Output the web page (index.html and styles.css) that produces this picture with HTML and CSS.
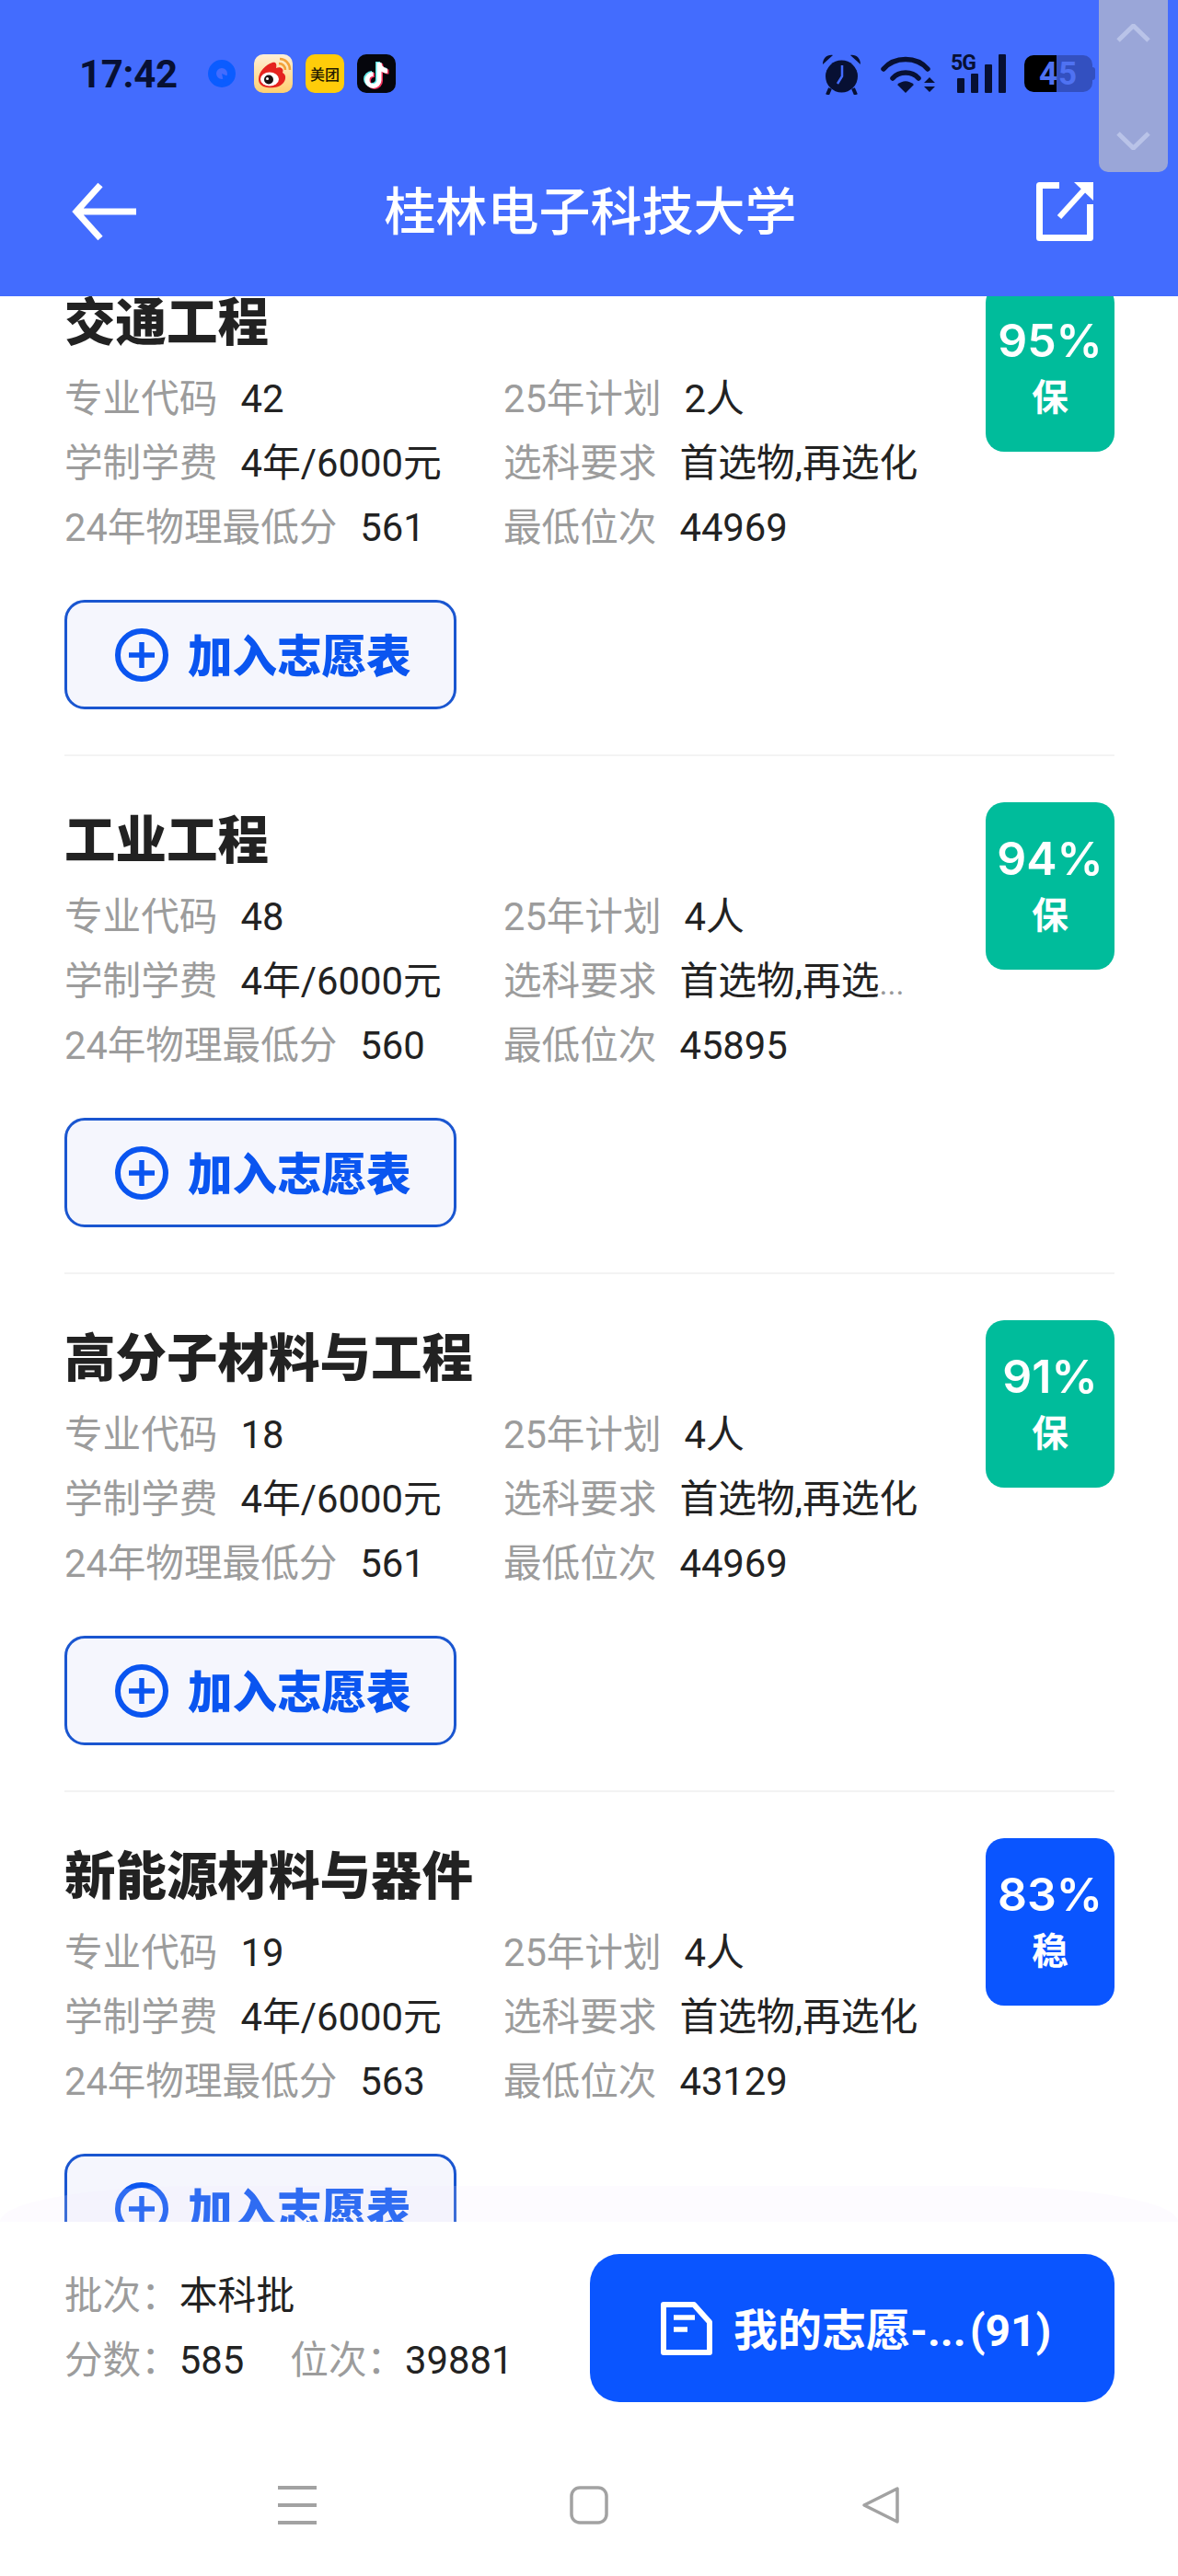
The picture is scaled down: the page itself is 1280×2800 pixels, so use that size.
FILE: index.html
```html
<!DOCTYPE html>
<html lang="zh">
<head>
  <meta charset="UTF-8" />
  <title>桂林电子科技大学</title>
  <link rel="stylesheet" href="styles.css">
</head>
<body>
<div class="app">

  <!-- Blue header: status bar + title bar -->
  <header class="header">
    <div class="status">
      <div class="status-left">
        <span class="time">17:42</span>
        <svg class="dot-icon" width="30" height="30" viewBox="0 0 30 30">
          <circle cx="15" cy="15" r="10.5" fill="none" stroke="#0b5cff" stroke-width="9"/>
          <path d="M15 15 L24 19 L17 24 Z" fill="#0b5cff"/>
        </svg>
        <svg class="tile" width="42" height="42" viewBox="0 0 42 42">
          <defs>
            <linearGradient id="wb" x1="0" y1="0" x2="0" y2="1">
              <stop offset="0" stop-color="#fff0d8"/>
              <stop offset="1" stop-color="#ffd070"/>
            </linearGradient>
          </defs>
          <rect width="42" height="42" rx="10" fill="url(#wb)"/>
          <path d="M5 27 C5 19 13 11 20 9 C24 8 25 11 24 15 C29 13 33 16 31 20 C35 22 35 27 32 31 C28 36 20 37 14 36 C8 35 5 32 5 27 Z" fill="#e5231f"/>
          <ellipse cx="17" cy="27" rx="10" ry="7.5" fill="#fff"/>
          <circle cx="16" cy="27.5" r="5" fill="#1a1214"/>
          <circle cx="14.5" cy="26.5" r="1.5" fill="#fff"/>
          <path d="M27 10 C31 10 34 13 34 17 M28 5 C34 5 39 10 39 17" fill="none" stroke="#f2a23a" stroke-width="2.5"/>
        </svg>
        <span class="tile tile-mt">美团</span>
        <svg class="tile" width="42" height="42" viewBox="0 0 42 42">
          <rect width="42" height="42" rx="10" fill="#05060c"/>
          <g fill="none" stroke-width="5">
            <path d="M22.5 8 V27 a6.5 6.5 0 1 1 -6.5 -6.5 M22.5 8 c0 5 4 9 9 9" stroke="#5fe7e6"/>
            <path d="M25.5 10 V29 a6.5 6.5 0 1 1 -6.5 -6.5 M25.5 10 c0 5 4 9 9 9" stroke="#f0305a"/>
            <path d="M24 9 V28 a6.5 6.5 0 1 1 -6.5 -6.5 M24 9 c0 5 4 9 9 9" stroke="#fff"/>
          </g>
        </svg>
      </div>
      <div class="status-right">
        <svg width="43" height="45" viewBox="0 0 43 45">
          <circle cx="21.5" cy="25" r="17.5" fill="#071033"/>
          <path d="M1 12 C1 5 6 1 12 2 Z M42 12 C42 5 37 1 31 2 Z" fill="#071033"/>
          <path d="M9 38 L6 45 M34 38 L37 45" stroke="#071033" stroke-width="4"/>
          <path d="M22 13 V25 L17 33" fill="none" stroke="#436cfe" stroke-width="2.5"/>
        </svg>
        <svg class="wifi" width="60" height="42" viewBox="0 0 60 42">
          <g fill="none" stroke="#071033" stroke-width="5.5" stroke-linecap="round">
            <path d="M3 16 C15 2 39 2 51 16"/>
            <path d="M13 26 C20 18 34 18 41 26"/>
          </g>
          <path d="M18 33 C24 28 30 28 36 33 L27 42 Z" fill="#071033"/>
          <path d="M47 31 L53 25 L59 31 Z M47 35 L59 35 L53 41 Z" fill="#071033"/>
        </svg>
        <div class="signal">
          <span class="net">5G</span>
          <i class="bar bar1"></i>
          <i class="bar bar2"></i>
          <i class="bar bar3"></i>
          <i class="bar bar4"></i>
        </div>
        <div class="battery">
          <span class="battery-level">45</span>
        </div>
        <i class="battery-nub"></i>
      </div>
    </div>

    <div class="titlebar">
      <svg class="back" width="70" height="64" viewBox="0 0 70 64">
        <path d="M70 32 H6 M31 3 L5 32 L31 61" fill="none" stroke="#fff" stroke-width="7"/>
      </svg>
      <h1 class="title">桂林电子科技大学</h1>
      <svg class="share" width="62" height="64" viewBox="0 0 62 64">
        <path d="M25 3.5 H3.5 V60.5 H58.5 V24" fill="none" stroke="#fff" stroke-width="7" stroke-linejoin="round"/>
        <path d="M25 38 L54 6" fill="none" stroke="#fff" stroke-width="6"/>
        <path d="M41 0 H62 V20 Z" fill="#fff"/>
      </svg>
    </div>
  </header>

  <!-- Floating scroll widget from the screen recorder -->
  <div class="scroll-pill">
    <svg width="37" height="20" viewBox="0 0 37 20"><path d="M2 18 L18.5 2 L35 18" fill="none" stroke="#b9c3e8" stroke-width="5"/></svg>
    <svg width="37" height="20" viewBox="0 0 37 20"><path d="M2 2 L18.5 18 L35 2" fill="none" stroke="#b9c3e8" stroke-width="5"/></svg>
  </div>

  <main class="list">
    <div class="list-inner">

      <section class="card">
        <div class="card-top">
          <div class="info">
            <h2 class="major">交通工程</h2>
            <div class="grid">
              <div class="cell"><span class="label">专业代码</span><span class="value">42</span></div>
              <div class="cell"><span class="label">25年计划</span><span class="value">2人</span></div>
              <div class="cell"><span class="label">学制学费</span><span class="value">4年/6000元</span></div>
              <div class="cell"><span class="label">选科要求</span><span class="value">首选物,再选化</span></div>
              <div class="cell"><span class="label">24年物理最低分</span><span class="value">561</span></div>
              <div class="cell"><span class="label">最低位次</span><span class="value">44969</span></div>
            </div>
          </div>
          <div class="badge badge-safe"><span class="pct">95%</span><span class="tag">保</span></div>
        </div>
        <button class="add">
          <svg width="58" height="58" viewBox="0 0 58 58"><circle cx="29" cy="29" r="26" fill="none" stroke="#0a55f0" stroke-width="6"/><path d="M15 29 H43 M29 15 V43" stroke="#0a55f0" stroke-width="5.5"/></svg>
          <span class="add-text">加入志愿表</span>
        </button>
      </section>

      <section class="card">
        <div class="card-top">
          <div class="info">
            <h2 class="major">工业工程</h2>
            <div class="grid">
              <div class="cell"><span class="label">专业代码</span><span class="value">48</span></div>
              <div class="cell"><span class="label">25年计划</span><span class="value">4人</span></div>
              <div class="cell"><span class="label">学制学费</span><span class="value">4年/6000元</span></div>
              <div class="cell"><span class="label">选科要求</span><span class="value">首选物,再选<span class="dots">...</span></span></div>
              <div class="cell"><span class="label">24年物理最低分</span><span class="value">560</span></div>
              <div class="cell"><span class="label">最低位次</span><span class="value">45895</span></div>
            </div>
          </div>
          <div class="badge badge-safe"><span class="pct">94%</span><span class="tag">保</span></div>
        </div>
        <button class="add">
          <svg width="58" height="58" viewBox="0 0 58 58"><circle cx="29" cy="29" r="26" fill="none" stroke="#0a55f0" stroke-width="6"/><path d="M15 29 H43 M29 15 V43" stroke="#0a55f0" stroke-width="5.5"/></svg>
          <span class="add-text">加入志愿表</span>
        </button>
      </section>

      <section class="card">
        <div class="card-top">
          <div class="info">
            <h2 class="major">高分子材料与工程</h2>
            <div class="grid">
              <div class="cell"><span class="label">专业代码</span><span class="value">18</span></div>
              <div class="cell"><span class="label">25年计划</span><span class="value">4人</span></div>
              <div class="cell"><span class="label">学制学费</span><span class="value">4年/6000元</span></div>
              <div class="cell"><span class="label">选科要求</span><span class="value">首选物,再选化</span></div>
              <div class="cell"><span class="label">24年物理最低分</span><span class="value">561</span></div>
              <div class="cell"><span class="label">最低位次</span><span class="value">44969</span></div>
            </div>
          </div>
          <div class="badge badge-safe"><span class="pct">91%</span><span class="tag">保</span></div>
        </div>
        <button class="add">
          <svg width="58" height="58" viewBox="0 0 58 58"><circle cx="29" cy="29" r="26" fill="none" stroke="#0a55f0" stroke-width="6"/><path d="M15 29 H43 M29 15 V43" stroke="#0a55f0" stroke-width="5.5"/></svg>
          <span class="add-text">加入志愿表</span>
        </button>
      </section>

      <section class="card">
        <div class="card-top">
          <div class="info">
            <h2 class="major">新能源材料与器件</h2>
            <div class="grid">
              <div class="cell"><span class="label">专业代码</span><span class="value">19</span></div>
              <div class="cell"><span class="label">25年计划</span><span class="value">4人</span></div>
              <div class="cell"><span class="label">学制学费</span><span class="value">4年/6000元</span></div>
              <div class="cell"><span class="label">选科要求</span><span class="value">首选物,再选化</span></div>
              <div class="cell"><span class="label">24年物理最低分</span><span class="value">563</span></div>
              <div class="cell"><span class="label">最低位次</span><span class="value">43129</span></div>
            </div>
          </div>
          <div class="badge badge-stable"><span class="pct">83%</span><span class="tag">稳</span></div>
        </div>
        <button class="add">
          <svg width="58" height="58" viewBox="0 0 58 58"><circle cx="29" cy="29" r="26" fill="none" stroke="#0a55f0" stroke-width="6"/><path d="M15 29 H43 M29 15 V43" stroke="#0a55f0" stroke-width="5.5"/></svg>
          <span class="add-text">加入志愿表</span>
        </button>
      </section>

    </div>
    <div class="fade"></div>
  </main>

  <footer class="footer">
    <div class="footer-main">
      <div class="summary">
        <div class="summary-row"><span class="label">批次：</span><span class="value">本科批</span></div>
        <div class="summary-row">
          <span class="label">分数：</span><span class="value">585</span>
          <span class="label label-gap">位次：</span><span class="value">39881</span>
        </div>
      </div>
      <button class="mine">
        <svg width="56" height="58" viewBox="0 0 56 58">
          <path d="M3 3 H36 L53 22 V55 H3 Z" fill="none" stroke="#fff" stroke-width="6" stroke-linejoin="round"/>
          <path d="M14 17 H37 M14 30 H29" stroke="#fff" stroke-width="5.5"/>
        </svg>
        <span class="mine-text">我的志愿-...<span class="count">(91)</span></span>
      </button>
    </div>
    <nav class="sysnav">
      <svg width="42" height="42" viewBox="0 0 42 42"><path d="M0 2 H42 M0 21 H42 M0 40 H42" stroke="#a2a2a2" stroke-width="4"/></svg>
      <svg width="42" height="42" viewBox="0 0 42 42"><rect x="2" y="2" width="38" height="38" rx="9" fill="none" stroke="#a2a2a2" stroke-width="3.5"/></svg>
      <svg width="42" height="42" viewBox="0 0 42 42"><path d="M39 3 V39 L3 21 Z" fill="none" stroke="#a2a2a2" stroke-width="3.5" stroke-linejoin="round"/></svg>
    </nav>
  </footer>

</div>
</body>
</html>
```

FILE: styles.css
```css
* {
  box-sizing: border-box;
}
html, body {
  margin: 0;
  padding: 0;
  background: #fff;
}
body {
  font-family: Roboto, "Noto Sans CJK SC", sans-serif;
  color: #222;
}
h1, h2 {
  margin: 0;
}
button {
  font-family: inherit;
  padding: 0;
  cursor: pointer;
}

.app {
  position: relative;
  width: 1280px;
  height: 2800px;
  display: flex;
  flex-direction: column;
  overflow: hidden;
}

/* header */
.header {
  flex: none;
  height: 322px;
  background: #436cfe;
  position: relative;
  z-index: 2;
}
.status {
  height: 160px;
  display: flex;
  justify-content: space-between;
  align-items: center;
  padding: 0 90px 0 86px;
}
.status-left, .status-right {
  display: flex;
  align-items: center;
}
.time {
  font-size: 42px;
  font-weight: 700;
  letter-spacing: -0.3px;
  color: #071033;
  width: 140px;
}
.dot-icon {
  margin-right: 20px;
}
.tile {
  display: block;
  width: 42px;
  height: 42px;
  margin-right: 14px;
}
.tile:last-child {
  margin-right: 0;
}
.tile-mt {
  display: flex;
  align-items: center;
  justify-content: center;
  border-radius: 10px;
  background: #ffcc0a;
  color: #221a00;
  font-size: 16px;
  font-weight: 500;
}
.wifi {
  margin-left: 21px;
}
.signal {
  position: relative;
  width: 60px;
  height: 42px;
  margin-left: 16px;
  display: flex;
  align-items: flex-end;
  justify-content: flex-end;
  gap: 7px;
}
.net {
  position: absolute;
  left: 0;
  top: -4px;
  font-size: 23px;
  font-weight: 700;
  letter-spacing: -1px;
  color: #071033;
}
.bar {
  display: block;
  width: 8px;
  background: #071033;
  border-radius: 1px;
}
.bar1 { height: 16px; }
.bar2 { height: 21px; }
.bar3 { height: 31px; }
.bar4 { height: 42px; }
.battery {
  width: 74px;
  height: 40px;
  margin-left: 20px;
  border-radius: 10px;
  background: linear-gradient(to right, #000 35px, #3350c0 35px);
  display: flex;
  align-items: center;
  justify-content: center;
}
.battery-level {
  font-size: 35px;
  font-weight: 700;
  color: #4f72f2;
  letter-spacing: 1px;
}
.battery-nub {
  display: block;
  width: 3px;
  height: 14px;
  background: #3350c0;
  border-radius: 0 3px 3px 0;
}
.titlebar {
  height: 140px;
  display: grid;
  grid-template-columns: 1fr auto 1fr;
  align-items: center;
  padding: 0 78px;
}
.back {
  justify-self: start;
}
.share {
  justify-self: end;
  margin-right: 14px;
}
.title {
  font-size: 56px;
  font-weight: 500;
  color: #fff;
  line-height: 1;
  padding: 2px 0 0 3px;
}

/* floating scroll widget */
.scroll-pill {
  position: absolute;
  z-index: 3;
  left: 1194px;
  top: 0;
  width: 75px;
  height: 187px;
  padding: 26px 0 24px;
  background: #9aa6d8;
  border-radius: 0 0 10px 10px;
  display: flex;
  flex-direction: column;
  justify-content: space-between;
  align-items: center;
}

/* list */
.list {
  flex: 1;
  position: relative;
  overflow: hidden;
  padding: 0 69px 0 70px;
}
.list-inner {
  margin-top: -63px;
}
.card {
  height: 563px;
  padding-top: 50px;
  border-bottom: 2px solid #f3f3f3;
}
.card-top {
  position: relative;
}
.major {
  font-size: 55.5px;
  font-weight: 900;
  line-height: 86px;
  margin-bottom: 4px;
  color: #222;
}
.grid {
  display: grid;
  grid-template-columns: 477px 1fr;
  grid-auto-rows: 70px;
  width: 1000px;
}
.cell {
  display: flex;
  align-items: baseline;
  gap: 25px;
  line-height: 70px;
}
.label {
  font-size: 41.6px;
  color: #9c9c9c;
  white-space: nowrap;
}
.value {
  font-size: 41.8px;
  color: #222;
  white-space: nowrap;
}
.dots {
  font-size: 34px;
  color: #999;
}
.badge {
  position: absolute;
  top: 0;
  right: 0;
  width: 140px;
  height: 182px;
  border-radius: 20px;
  color: #fff;
  display: flex;
  flex-direction: column;
  align-items: center;
  padding-top: 28px;
}
.badge-safe {
  background: #00bc9b;
}
.badge-stable {
  background: #0a55ff;
}
.pct {
  font-family: Inter, sans-serif;
  font-size: 50px;
  font-weight: 600;
  line-height: 66px;
}
.tag {
  font-size: 40px;
  font-weight: 700;
  line-height: 60px;
}
.add {
  margin-top: 43px;
  width: 426px;
  height: 119px;
  border: 3.5px solid #1a56d0;
  border-radius: 22px;
  background: #f5f6fd;
  color: #0a55f0;
  font-size: 48.5px;
  font-weight: 900;
  display: flex;
  align-items: center;
  gap: 21px;
  padding-left: 52px;
}
.add-text {
  margin-bottom: 4px;
}
.fade {
  position: absolute;
  left: 0;
  right: 0;
  bottom: 0;
  height: 39px;
  border-radius: 220px 220px 0 0 / 39px 39px 0 0;
  background: rgba(240, 228, 255, 0.16);
}

/* footer */
.footer {
  flex: none;
  height: 385px;
  background: #fff;
  position: relative;
  z-index: 1;
}
.footer-main {
  display: flex;
  justify-content: space-between;
  align-items: center;
  padding: 35px 69px 0 70px;
}
.summary-row {
  height: 70px;
  display: flex;
  align-items: baseline;
  line-height: 70px;
}
.summary-row .value {
  font-size: 41.8px;
}
.label-gap {
  margin-left: 50px;
}
.mine {
  width: 570px;
  height: 161px;
  border: 0;
  border-radius: 32px;
  background: #0a55ff;
  color: #fff;
  font-size: 48px;
  font-weight: 700;
  display: flex;
  align-items: center;
  gap: 23px;
  padding-left: 77px;
}
.mine-text {
  margin-bottom: 3px;
}
.count {
  margin-left: 4px;
}
.sysnav {
  display: flex;
  justify-content: center;
  gap: 275px;
  padding-top: 91px;
}
```
